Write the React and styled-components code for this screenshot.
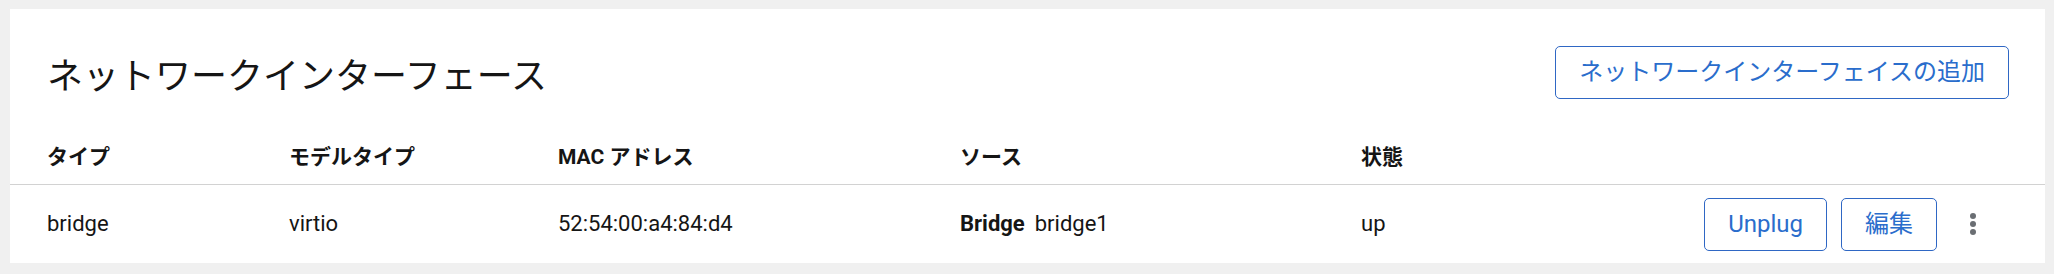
import React from "react";
import styled, { createGlobalStyle } from "styled-components";

const Global = createGlobalStyle`
  html, body { margin: 0; padding: 0; background: #f0f0f0; }
  body { font-family: Roboto, "Noto Sans CJK JP", sans-serif; color: #151515; }
  * { box-sizing: border-box; }
`;

const Page = styled.div`
  padding: 9px 9px 0 10px;
`;

const Card = styled.section`
  background: #ffffff;
`;

const CardHeader = styled.div`
  display: flex;
  align-items: center;
  justify-content: space-between;
  padding: 37px 36px 0 37px;
`;

const Title = styled.h2`
  margin: 0;
  font-family: "Noto Sans CJK JP", sans-serif;
  font-weight: 400;
  font-size: 36px;
  line-height: 52px;
  color: #151515;
`;

const Button = styled.button`
  font-family: Roboto, "Noto Sans CJK JP", sans-serif;
  font-size: 24px;
  line-height: 37px;
  padding: 7px 23px;
  border: 1px solid #2f67c4;
  border-radius: 5px;
  background: #ffffff;
  color: #2a6dcc;
  cursor: pointer;
  white-space: nowrap;
`;

const Row = styled.div`
  display: grid;
  grid-template-columns: 242px 269px 402px 401px 1fr auto;
  align-items: center;
  padding: 0 48px 0 37px;
  border-bottom: ${(p) => (p.$head ? "1px solid #d2d2d2" : "none")};
  min-height: ${(p) => (p.$head ? "0" : "78px")};
`;

const HeadCell = styled.div`
  font-weight: 700;
  font-size: 21px;
  line-height: 30px;
  padding: 43px 0 12px;
`;

const Cell = styled.div`
  font-size: 22px;
  line-height: 30px;
`;

const Strong = styled.b`
  font-weight: 700;
  margin-right: 10px;
`;

const Actions = styled.div`
  display: flex;
  align-items: center;
  gap: 14px;
`;

const Kebab = styled.button`
  width: 48px;
  height: 48px;
  margin-left: -2px;
  border: none;
  background: transparent;
  display: flex;
  align-items: center;
  justify-content: center;
  padding: 0;
  cursor: pointer;
`;

export default function App() {
  return (
    <>
      <Global />
      <Page>
        <Card>
          <CardHeader>
            <Title>ネットワークインターフェース</Title>
            <Button>ネットワークインターフェイスの追加</Button>
          </CardHeader>
          <Row $head>
            <HeadCell>タイプ</HeadCell>
            <HeadCell>モデルタイプ</HeadCell>
            <HeadCell>MAC アドレス</HeadCell>
            <HeadCell>ソース</HeadCell>
            <HeadCell>状態</HeadCell>
            <HeadCell />
          </Row>
          <Row>
            <Cell>bridge</Cell>
            <Cell>virtio</Cell>
            <Cell>52:54:00:a4:84:d4</Cell>
            <Cell>
              <Strong>Bridge</Strong>bridge1
            </Cell>
            <Cell>up</Cell>
            <Actions>
              <Button>Unplug</Button>
              <Button>編集</Button>
              <Kebab aria-label="more">
                <svg width="6" height="22" viewBox="0 0 6 22">
                  <circle cx="3" cy="3" r="3" fill="#6a6e73" />
                  <circle cx="3" cy="11" r="3" fill="#6a6e73" />
                  <circle cx="3" cy="19" r="3" fill="#6a6e73" />
                </svg>
              </Kebab>
            </Actions>
          </Row>
        </Card>
      </Page>
    </>
  );
}
